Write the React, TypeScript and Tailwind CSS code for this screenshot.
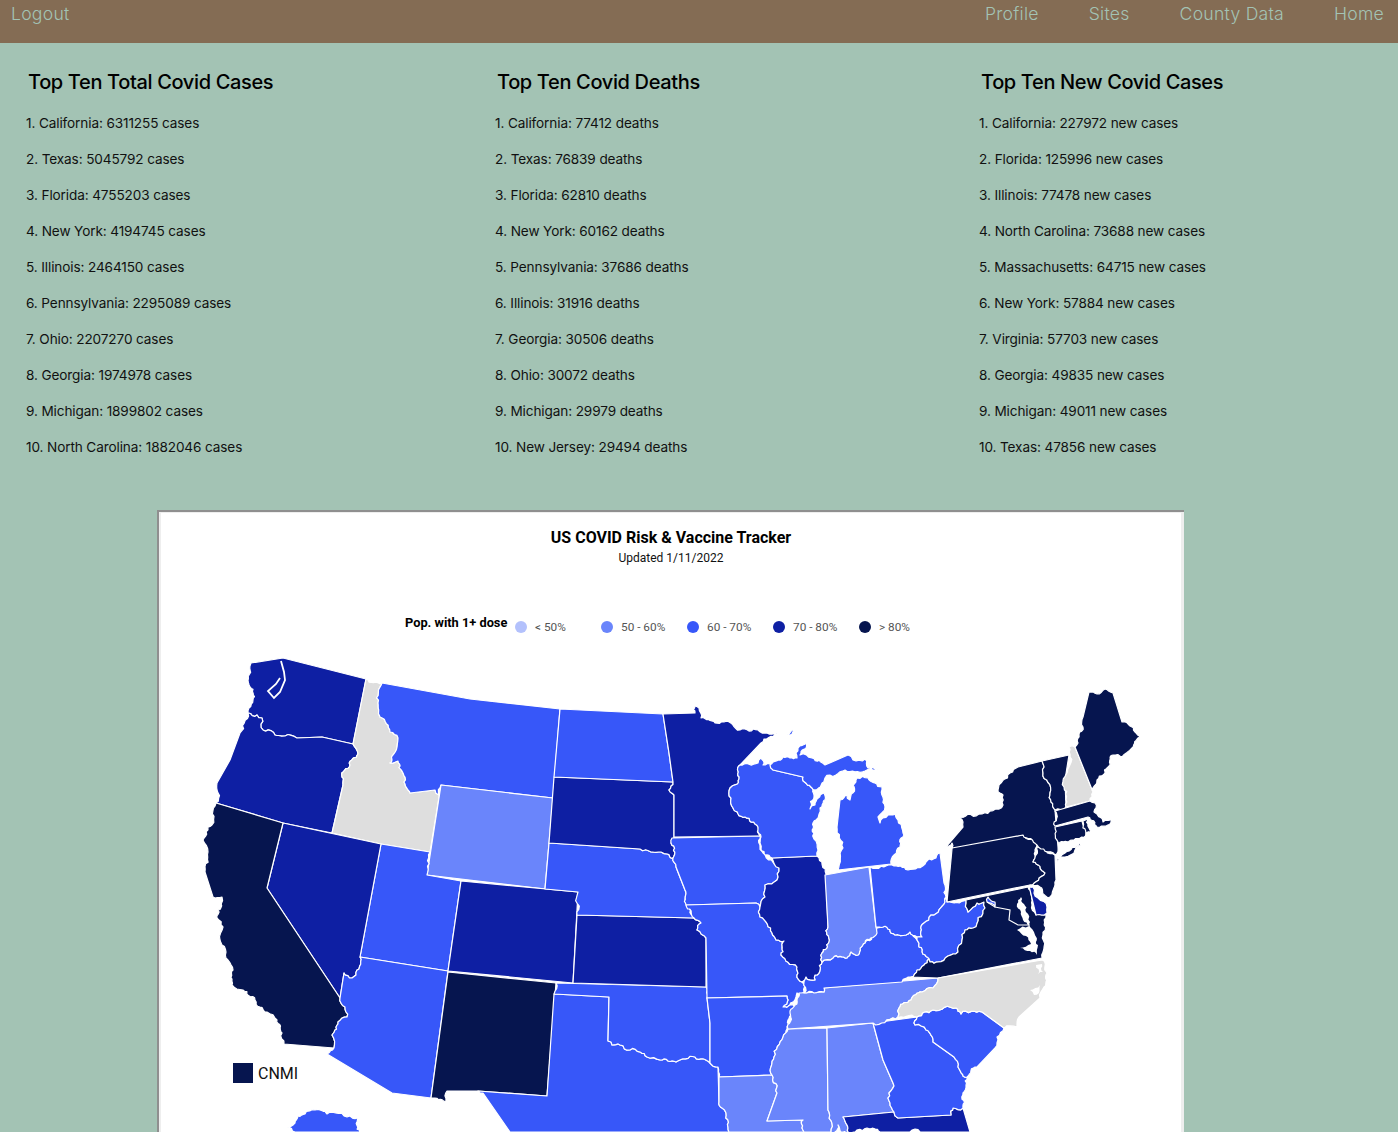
const navLinks = ["Profile", "Sites", "County Data", "Home"];

const columns = [
  {
    title: "Top Ten Total Covid Cases",
    width: "w-[469px]",
    rows: [
      "1. California: 6311255 cases",
      "2. Texas: 5045792 cases",
      "3. Florida: 4755203 cases",
      "4. New York: 4194745 cases",
      "5. Illinois: 2464150 cases",
      "6. Pennsylvania: 2295089 cases",
      "7. Ohio: 2207270 cases",
      "8. Georgia: 1974978 cases",
      "9. Michigan: 1899802 cases",
      "10. North Carolina: 1882046 cases",
    ],
  },
  {
    title: "Top Ten Covid Deaths",
    width: "w-[484px]",
    rows: [
      "1. California: 77412 deaths",
      "2. Texas: 76839 deaths",
      "3. Florida: 62810 deaths",
      "4. New York: 60162 deaths",
      "5. Pennsylvania: 37686 deaths",
      "6. Illinois: 31916 deaths",
      "7. Georgia: 30506 deaths",
      "8. Ohio: 30072 deaths",
      "9. Michigan: 29979 deaths",
      "10. New Jersey: 29494 deaths",
    ],
  },
  {
    title: "Top Ten New Covid Cases",
    width: "w-[400px]",
    rows: [
      "1. California: 227972 new cases",
      "2. Florida: 125996 new cases",
      "3. Illinois: 77478 new cases",
      "4. North Carolina: 73688 new cases",
      "5. Massachusetts: 64715 new cases",
      "6. New York: 57884 new cases",
      "7. Virginia: 57703 new cases",
      "8. Georgia: 49835 new cases",
      "9. Michigan: 49011 new cases",
      "10. Texas: 47856 new cases",
    ],
  },
];

const legend = [
  { label: "< 50%", dot: "bg-[#b3c1fc]" },
  { label: "50 - 60%", dot: "bg-[#6a85fb]" },
  { label: "60 - 70%", dot: "bg-[#3757f9]" },
  { label: "70 - 80%", dot: "bg-[#0e1fa3]" },
  { label: "> 80%", dot: "bg-[#06154f]" },
];

const NAVY = "#06154f";
const DARK = "#0e1fa3";
const MID = "#3757f9";
const LIGHT = "#6a85fb";
const GRAY = "#dedede";

// traced by hand from the tile map, in page pixels
const states: [string, string][] = [
  [DARK, "251,663 283,658 366,679 353,744 322,737 297,738 285,736 273,732 263,730 262,718 257,715 248,713 249,708 253,700 250,687 250,670"],
  [DARK, "248,713 257,715 262,718 263,730 273,732 285,736 297,738 322,737 353,744 358,754 350,765 342,777 343,785 332,833 283,823 216,803 217,783 230,760 240,733"],
  [GRAY, "366,679 382,683 378,703 380,717 390,732 398,738 392,760 390,763 398,761 403,773 408,790 410,793 435,790 439,795 441,785 430,852 381,844 332,833 343,785 342,777 350,765 358,754 353,744"],
  [MID, "382,683 470,699 560,709 553,798 441,785 439,795 435,790 410,793 408,790 403,773 398,761 390,763 392,760 398,738 390,732 380,717 378,703"],
  [LIGHT, "441,785 553,798 545,889 427,875"],
  [MID, "381,844 430,852 427,875 461,881 448,971 360,957"],
  [DARK, "283,823 381,844 360,957 356,975 352,978 344,973 340,998 267,888"],
  [NAVY, "216,803 283,823 267,888 340,998 347,1017 338,1022 332,1035 334,1048 284,1044 282,1033 277,1020 267,1012 255,1000 243,990 232,985 233,970 228,960 220,940 223,927 217,918 218,910 222,897 213,897 205,872 208,852 203,840 212,825"],
  [MID, "360,957 448,971 431,1098 392,1093 327,1054 334,1048 332,1035 338,1022 347,1017 340,998 344,973 352,978 356,975"],
  [NAVY, "448,972 556,983 547,1096 478,1091 447,1091 446,1101 431,1098"],
  [DARK, "461,881 578,892 573,983 448,971"],
  [MID, "554,994 609,997 608,1041 612,1045 620,1045 630,1050 640,1052 647,1057 660,1060 676,1062 695,1057 710,1063 718,1067 719,1102 726,1113 729,1132 510,1132 483,1093 478,1091 547,1096"],
  [MID, "556,983 706,987 707,998 710,1023 710,1063 695,1057 676,1062 660,1060 647,1057 640,1052 630,1050 620,1045 612,1045 608,1041 609,997 554,994"],
  [DARK, "577,915 694,918 701,923 697,930 706,938 706,987 573,983"],
  [MID, "549,843 640,849 651,852 661,852 673,858 676,867 685,890 686,903 694,918 577,915 578,892 545,889"],
  [DARK, "554,777 673,782 669,790 674,795 674,837 671,843 673,858 661,852 651,852 640,849 549,843"],
  [MID, "560,709 663,714 669,753 673,782 554,777"],
  [DARK, "663,714 695,713 695,706 699,708 701,718 715,723 724,722 740,730 758,730 777,733 761,743 740,765 739,779 730,788 733,808 745,817 758,827 760,836 674,837 674,795 669,790 673,782 669,753"],
  [MID, "672,838 760,836 763,853 779,868 777,880 765,885 765,897 760,907 756,903 686,905 685,890 676,867 673,858 671,843"],
  [MID, "686,905 756,903 760,907 760,917 772,933 776,940 784,941 781,955 797,967 797,975 802,982 804,992 797,993 790,1005 783,1007 788,1000 787,996 707,998 706,938 697,930 701,923 694,918"],
  [MID, "707,998 787,996 788,1000 783,1007 790,1005 795,1007 788,1020 783,1037 774,1057 772,1075 719,1077 718,1067 710,1063 710,1023"],
  [LIGHT, "719,1077 772,1075 777,1093 767,1121 803,1120 802,1128 804,1132 729,1132 726,1113 719,1102"],
  [LIGHT, "788,1029 827,1028 828,1110 831,1132 804,1132 802,1128 803,1120 767,1121 777,1093 772,1075 774,1057 783,1037"],
  [LIGHT, "827,1028 873,1023 883,1060 893,1083 889,1093 894,1112 843,1117 847,1125 848,1132 841,1132 838,1125 835,1132 831,1132 828,1110"],
  [DARK, "843,1117 894,1112 898,1118 951,1115 953,1108 963,1108 970,1132 920,1132 915,1129 910,1132 880,1132 867,1128 857,1130 848,1132 847,1125"],
  [MID, "873,1023 917,1017 915,1025 926,1030 933,1042 954,1057 958,1067 967,1077 963,1093 963,1108 953,1108 951,1115 898,1118 894,1112 889,1093 893,1083 883,1060"],
  [MID, "917,1017 933,1010 956,1008 961,1014 982,1012 1004,1028 997,1037 995,1048 977,1067 967,1077 958,1067 954,1057 933,1042 926,1030 915,1025"],
  [LIGHT, "788,1029 790,1013 797,1000 799,993 824,992 824,988 938,978 933,988 922,992 911,1000 899,1008 896,1019 873,1023"],
  [MID, "804,993 824,992 824,988 902,982 911,977 917,970 929,959 919,947 917,940 910,932 906,935 895,935 883,927 877,928 876,933 865,943 858,955 851,952 847,958 833,958 822,962 820,970 815,975 815,980 806,977 804,982"],
  [DARK, "772,858 817,856 826,874 828,927 829,942 822,953 822,962 820,970 815,975 815,980 806,977 802,982 797,975 797,967 781,955 784,941 776,940 772,933 760,917 760,907 765,897 765,885 777,880 779,868"],
  [LIGHT, "825,875 869,867 876,927 877,933 865,943 858,955 851,952 847,958 833,958 822,962 822,953 829,942 828,927"],
  [MID, "870,867 892,865 908,870 926,862 940,853 944,883 945,902 931,915 924,923 922,937 917,937 910,932 906,935 895,935 883,927 876,927"],
  [MID, "945,898 947,902 966,900 968,912 977,903 984,902 985,908 973,928 965,930 962,940 958,952 948,956 938,962 930,962 929,959 919,947 917,940 917,937 922,937 924,923 931,915 945,902"],
  [NAVY, "947,902 952,849 952,845 1023,835 1037,846 1033,862 1045,873 1030,885"],
  [NAVY, "966,900 1028,887 1032,905 1036,915 1046,915 1043,935 1042,958 938,978 911,977 917,970 929,959 930,962 938,962 948,956 958,952 962,940 965,930 973,928 985,908 984,902 977,903 968,912"],
  [MID, "988,897 995,902 995,907 987,902"],
  [DARK, "1029,886 1033,887 1038,898 1047,907 1047,913 1036,915"],
  [NAVY, "1037,847 1055,855 1056,880 1048,898 1040,887 1030,885 1045,873 1033,862"],
  [NAVY, "1042,761 1043,773 1050,793 1055,810 1058,847 1055,855 1037,845 1023,835 952,848 952,843 945,848 963,827 960,818 982,814 1003,805 1003,795 998,790 1010,773 1018,767"],
  [NAVY, "1056,862 1065,853 1081,843 1075,850 1065,857"],
  [NAVY, "1042,761 1069,755 1065,780 1066,807 1055,810 1050,793 1043,773"],
  [GRAY, "1069,747 1075,747 1093,792 1090,801 1066,807 1064,787 1069,767"],
  [NAVY, "1075,747 1078,743 1083,727 1083,717 1089,692 1097,694 1105,689 1113,693 1122,722 1135,732 1140,737 1132,748 1122,757 1113,755 1108,767 1097,780 1093,792"],
  [NAVY, "1055,811 1090,801 1095,803 1094,812 1103,822 1113,819 1106,826 1097,827 1088,817 1055,826"],
  [NAVY, "1055,827 1082,821 1086,834 1072,840 1059,844"],
  [NAVY, "1083,821 1088,819 1091,832 1086,834"],
  [GRAY, "938,978 1042,960 1047,973 1044,987 1040,998 1019,1017 1017,1027 1004,1028 982,1012 961,1014 956,1008 933,1010 917,1017 896,1019 899,1008 911,1000 922,992 933,988"],
  [MID, "740,765 758,763 761,758 763,765 772,765 773,770 803,777 812,788 814,795 810,809 815,805 824,793 820,808 816,820 814,833 817,856 772,858 765,855 760,843 758,827 745,817 733,808 730,788 739,779"],
  [MID, "770,765 783,757 797,758 798,748 807,743 800,755 812,758 825,765 848,755 853,760 865,759 868,768 878,769 865,771 845,770 825,778 815,790 812,788 803,777 773,770"],
  [MID, "857,778 868,778 882,787 885,807 878,817 880,823 888,815 897,812 903,833 900,847 891,864 838,870 843,848 837,827 840,800 847,795 850,800 853,785"],
  [MID, "287,1127 295,1123 298,1116 305,1114 315,1110 327,1114 350,1116 357,1118 360,1132 295,1132"],
  [MID, "787,735 795,729 790,735"],
];

// water cut into the land: Chesapeake Bay, Pamlico Sound
const water = [
  "1021,897 1017,904 1021,912 1023,920 1029,926 1017,930 1026,936 1031,944 1020,948 1030,951 1037,955 1038,945 1034,932 1030,922 1026,912 1024,904",
  "1036,965 1042,964 1043,972 1038,974",
  "1030,990 1040,985 1039,993 1034,995",
];

type Pt = [number, number];

// short edges are rivers and coasts: jag them, same way on both sides of a shared border
function jag(a: Pt, b: Pt): Pt[] {
  const len = Math.hypot(b[0] - a[0], b[1] - a[1]);
  if (len < 3.5) return [];
  const h = Math.sin(a[0] * 12.9898 + a[1] * 78.233 + b[0] * 37.719 + b[1] * 11.13) * 43758.5453;
  const off = Math.max(-1.6, Math.min(1.6, (h - Math.floor(h) - 0.5) * 0.5 * len));
  const m: Pt = [(a[0] + b[0]) / 2 - ((b[1] - a[1]) / len) * off, (a[1] + b[1]) / 2 + ((b[0] - a[0]) / len) * off];
  return [...jag(a, m), m, ...jag(m, b)];
}

function roughen(points: string) {
  const pts = points.split(" ").map((p) => p.split(",").map(Number) as Pt);
  const out: Pt[] = [];
  pts.forEach((a, i) => {
    const b = pts[(i + 1) % pts.length];
    out.push(a);
    if (Math.hypot(b[0] - a[0], b[1] - a[1]) < 24) {
      const flip = a[0] > b[0] || (a[0] === b[0] && a[1] > b[1]);
      const inner = flip ? jag(b, a).reverse() : jag(a, b);
      out.push(...inner);
    }
  });
  return out.map((p) => `${p[0].toFixed(1)},${p[1].toFixed(1)}`).join(" ");
}

function UsMap() {
  return (
    <svg viewBox="161 650 1020 482" className="block w-[1020px] h-[482px]">
      {states.map(([fill, points], i) => (
        <polygon key={i} points={roughen(points)} fill={fill} stroke="#ffffff" strokeWidth="1.2" strokeLinejoin="round" />
      ))}
      {water.map((points, i) => (
        <polygon key={i} points={roughen(points)} fill="#ffffff" />
      ))}
      {/* Puget Sound */}
      <polyline points="281,661 284,672 285,680 280,692 274,698 268,691 276,684 280,678" fill="none" stroke="#ffffff" strokeWidth="1.8" />
      {/* Potomac */}
      <polyline points="987,902 995,907 1000,908 1010,910 1009,920 1018,925 1030,925" fill="none" stroke="#ffffff" strokeWidth="1.2" />
      <rect x="233" y="1063" width="20" height="20" fill={NAVY} />
      <text x="258" y="1079" fontSize="16" fill="#111111" fontFamily="Roboto, sans-serif">
        CNMI
      </text>
    </svg>
  );
}

export default function App() {
  return (
    <div className="h-[1132px] overflow-hidden bg-[#a3c3b4] font-['Inter',sans-serif]">
      {/* Navbar */}
      <nav className="h-[43px] bg-[#846c54] flex justify-between pl-[11px] pr-[14px] text-[17.6px] font-light leading-[28px] tracking-[0.25px] text-[#a3c3b4]">
        <a>Logout</a>
        <div className="flex gap-[50px]">
          {navLinks.map((link) => (
            <a key={link}>{link}</a>
          ))}
        </div>
      </nav>

      {/* Top ten lists */}
      <div className="flex pl-[26px] pt-[24px]">
        {columns.map((col) => (
          <div key={col.title} className={col.width}>
            <h2 className="ml-[2px] text-[20px] font-medium leading-[30px] tracking-[-0.35px] text-black">{col.title}</h2>
            <div className="mt-[16px] flex flex-col gap-[16px]">
              {col.rows.map((row) => (
                <p key={row} className="text-[13.6px] leading-[20px] tracking-[-0.12px] text-[#111111]">
                  {row}
                </p>
              ))}
            </div>
          </div>
        ))}
      </div>

      {/* Datawrapper card */}
      <div className="ml-[157px] mt-[53px] w-[1027px] border-t-2 border-l-2 border-[#8f8f8f]">
        <div className="border-t border-l-2 border-r-[3px] border-[#eeeeee] bg-white font-['Roboto',sans-serif]">
          <div className="pt-[15px] text-center">
            <h1 className="text-[16px] font-bold leading-[19px] text-black">US COVID Risk &amp; Vaccine Tracker</h1>
            <p className="mt-[4px] text-[12px] leading-[14px] text-[#111111]">Updated 1/11/2022</p>
          </div>
          <div className="mt-[54px] flex h-[16px] items-center pl-[244px]">
            <span className="relative top-[-4px] w-[110px] text-[12.8px] font-bold leading-[14px] whitespace-nowrap text-black">Pop. with 1+ dose</span>
            {legend.map((item) => (
              <div key={item.label} className="flex w-[86px] items-center gap-[8px]">
                <span className={`h-[12px] w-[12px] rounded-full ${item.dot}`} />
                <span className="text-[11.8px] leading-[14px] text-[#555555]">{item.label}</span>
              </div>
            ))}
          </div>
          <div className="pt-[15px]">
            <UsMap />
          </div>
        </div>
      </div>
    </div>
  );
}
